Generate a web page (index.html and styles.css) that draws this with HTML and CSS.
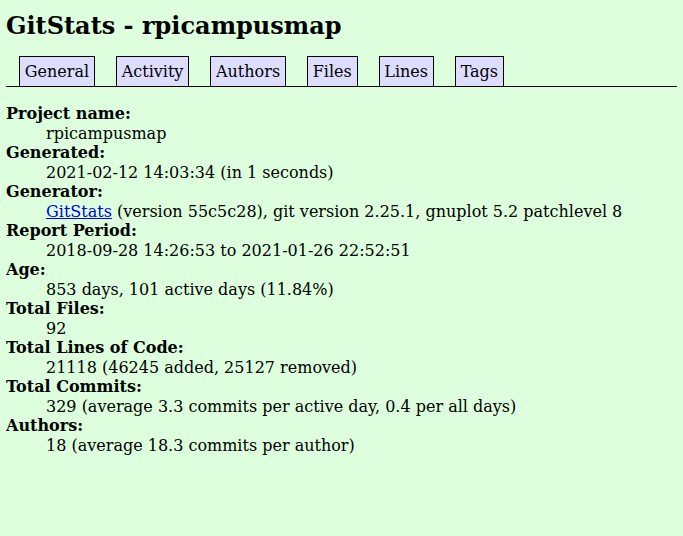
FILE: index.html
```html
<!DOCTYPE html>
<html>
<head>
<meta charset="utf-8">
<title>GitStats - rpicampusmap</title>
<link rel="stylesheet" href="styles.css">
</head>
<body>
<h1 class="title">GitStats - rpicampusmap</h1>
<nav class="nav">
<ul class="tabs">
<li><a class="tab" href="index.html">General</a></li>
<li><a class="tab" href="activity.html">Activity</a></li>
<li><a class="tab" href="authors.html">Authors</a></li>
<li><a class="tab" href="files.html">Files</a></li>
<li><a class="tab" href="lines.html">Lines</a></li>
<li><a class="tab" href="tags.html">Tags</a></li>
</ul>
</nav>
<dl class="info">
<dt>Project name</dt><dd>rpicampusmap</dd>
<dt>Generated</dt><dd>2021-02-12 14:03:34 (in 1 seconds)</dd>
<dt>Generator</dt><dd><a class="link" href="http://gitstats.sourceforge.net/">GitStats</a> (version 55c5c28), git version 2.25.1, gnuplot 5.2 patchlevel 8</dd>
<dt>Report Period</dt><dd>2018-09-28 14:26:53 to 2021-01-26 22:52:51</dd>
<dt>Age</dt><dd>853 days, 101 active days (11.84%)</dd>
<dt>Total Files</dt><dd>92</dd>
<dt>Total Lines of Code</dt><dd>21118 (46245 added, 25127 removed)</dd>
<dt>Total Commits</dt><dd>329 (average 3.3 commits per active day, 0.4 per all days)</dd>
<dt>Authors</dt><dd>18 (average 18.3 commits per author)</dd>
</dl>
</body>
</html>
```

FILE: styles.css
```css
html, body {
  background-color: #dfd;
}
body {
  margin: 0 6px;
  color: black;
  font-family: "DejaVu Serif", serif;
  font-size: 16px;
}
.title {
  font-size: 24px;
  font-weight: bold;
  margin: 12px 0 0;
  line-height: 28px;
}
.nav {
  margin-top: 16px;
  border-bottom: 1px solid black;
}
.tabs {
  display: flex;
  list-style: none;
  margin: 0;
  padding: 0 0 0 13px;
}
.tabs li {
  margin-right: 21px;
}
.tab {
  display: block;
  padding: 4px 4.8px 0;
  height: 25px;
  line-height: 22px;
  border: 1px solid black;
  border-bottom: 0;
  background-color: #ddf;
  color: black;
  text-decoration: none;
}
.info {
  margin: 17px 0 0;
  line-height: 19.5px;
}
.info dt {
  font-weight: bold;
}
.info dt::after {
  content: ':';
}
.info dd {
  margin-left: 40px;
}
.link {
  color: #00e;
}
```
